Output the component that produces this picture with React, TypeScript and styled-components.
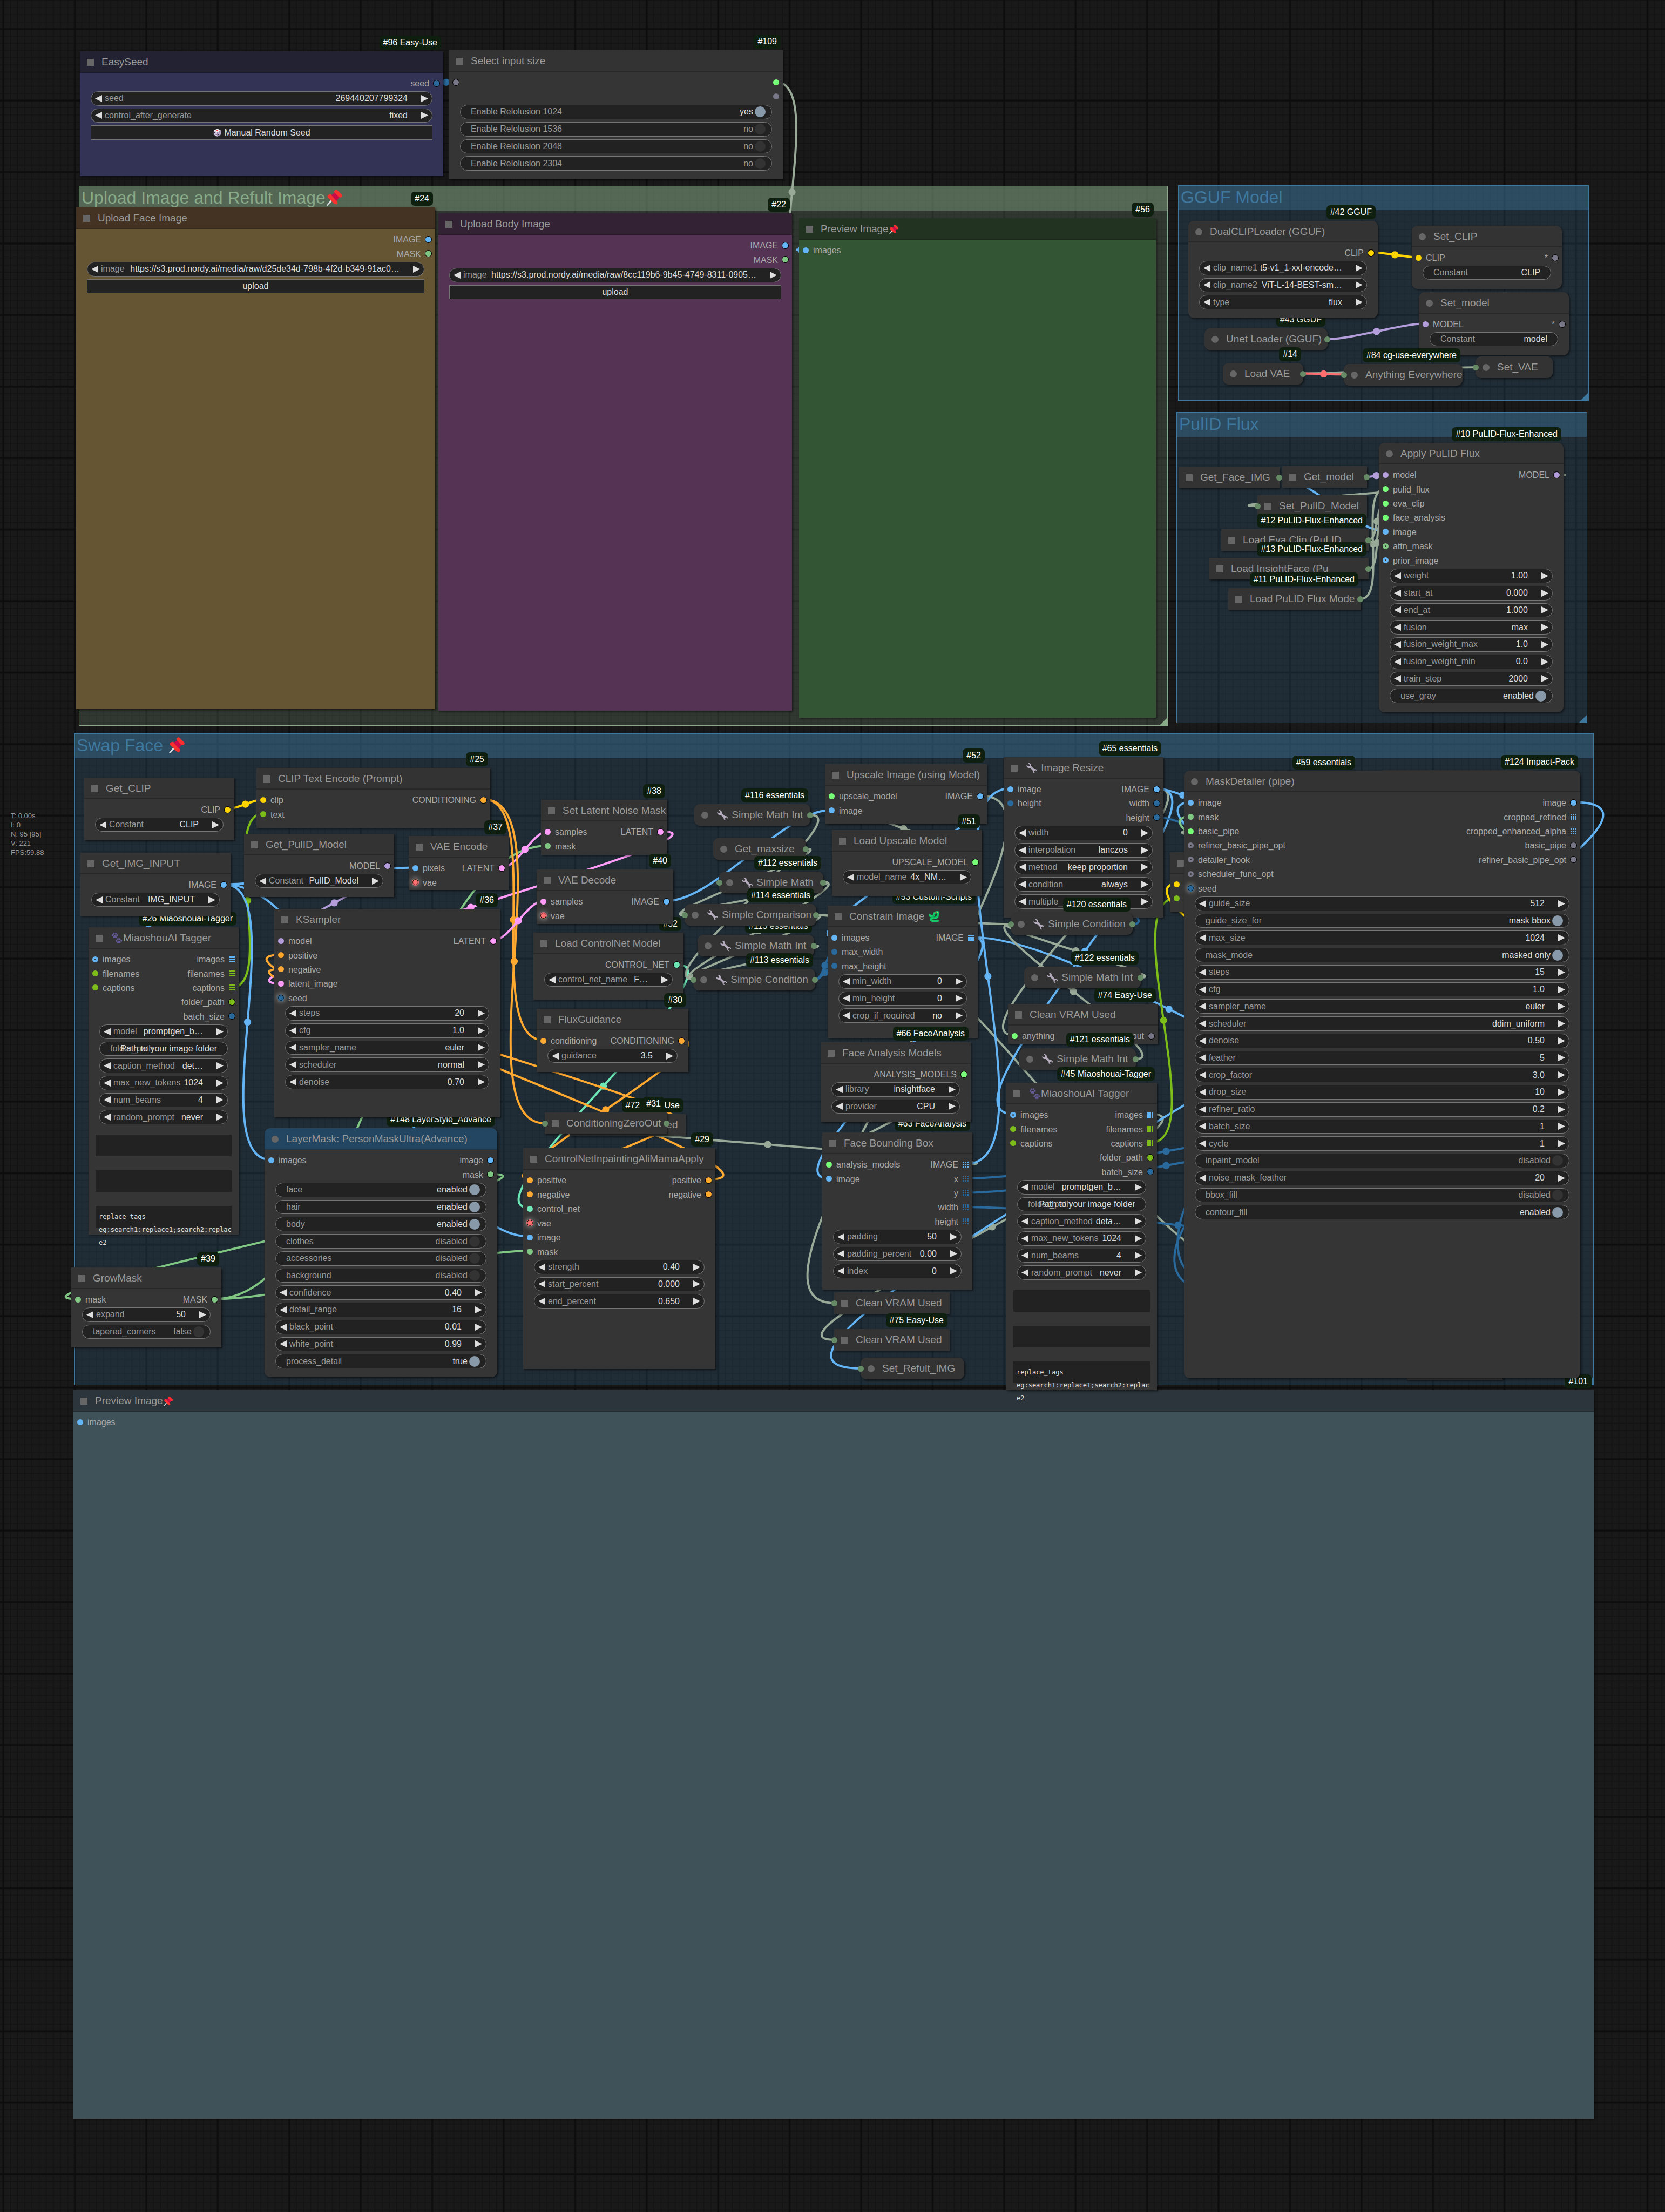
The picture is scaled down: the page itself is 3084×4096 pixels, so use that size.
import React from 'react';
import styled, { createGlobalStyle, css } from 'styled-components';

/* ---------- view ---------- */

const ZOOM = 0.8827;
const px = (v: number) => Math.round(v * ZOOM);

const TITLE = 45;
const SLOT = 30;
const ROW = 36;

const C = {
  image: '#64b5f6',
  mask: '#81c784',
  cond: '#ffa931',
  latent: '#ff9cf9',
  clip: '#ffd500',
  model: '#b39ddb',
  vae: '#ff6e6e',
  net: '#6ee7b7',
  str: '#7dbd1a',
  int: '#29699c',
  live: '#77ff77',
  any: '#777788',
  link: '#9aaa98',
};

/* ---------- types ---------- */

type SlotKind = 'dot' | 'out' | 'ring' | 'grid' | 'glow';
interface Slot { label: string; color: string; kind: SlotKind }
type WidgetKind = 'number' | 'combo' | 'toggle' | 'text' | 'button' | 'dice';
interface Widget { kind: WidgetKind; label: string; value: string; on?: boolean }
type IconName = 'wrench' | 'paw' | 'snake' | 'pin';
interface GraphNode {
  id: string;
  x: number;
  y: number;
  w: number;
  h?: number;
  title: string;
  round?: boolean;
  badge?: string;
  before?: IconName;
  after?: IconName;
  head?: string;
  body?: string;
  ins?: Slot[];
  outs?: Slot[];
  widgets?: Widget[];
  prompts?: boolean;
  left?: boolean;
  right?: boolean;
}
type End = [string, number] | { x: number; y: number };
interface Link { from: End; to: End; color: string }

const i = (label: string, color: string, kind: SlotKind = 'dot'): Slot => ({ label, color, kind });
const o = (label: string, color: string, kind: SlotKind = 'out'): Slot => ({ label, color, kind });
const num = (label: string, value: string): Widget => ({ kind: 'number', label, value });
const combo = (label: string, value: string): Widget => ({ kind: 'combo', label, value });
const text = (label: string, value: string): Widget => ({ kind: 'text', label, value });
const toggle = (label: string, value: string, on: boolean): Widget => ({ kind: 'toggle', label, value, on });
const button = (label: string, kind: WidgetKind = 'button'): Widget => ({ kind, label, value: '' });

/* ---------- graph ---------- */

const groups = [
  { title: 'Upload Image and Refult Image', pin: true, color: '#88aa88', x: 165, y: 390, w: 2285, h: 1133 },
  { title: 'GGUF Model', pin: false, color: '#3f789e', x: 2472, y: 389, w: 862, h: 452 },
  { title: 'PulID Flux', pin: false, color: '#3f789e', x: 2469, y: 864, w: 862, h: 653 },
  { title: 'Swap Face ', pin: true, color: '#3f789e', x: 155, y: 1538, w: 3189, h: 1367 },
];

const taggerIns = [i('images', C.image, 'ring'), i('filenames', C.str), i('captions', C.str)];
const taggerOuts = [
  o('images', C.image, 'grid'), o('filenames', C.str, 'grid'), o('captions', C.str, 'grid'),
  o('folder_path', C.str), o('batch_size', C.int),
];
const taggerWidgets = (method: string) => [
  combo('model', 'promptgen_b…'), text('folder_path', 'Path to your image folder'),
  combo('caption_method', method), num('max_new_tokens', '1024'),
  num('num_beams', '4'), combo('random_prompt', 'never'),
];

const nodes: GraphNode[] = [
  { id: '101', x: 154, y: 2916, w: 3190, h: 1528, title: 'Preview Image', after: 'pin', badge: '#101', head: '#2b353b', body: '#3f5159', ins: [i('images', C.image)] },
  { id: '96', x: 168, y: 108, w: 762, h: 262, title: 'EasySeed', badge: '#96 Easy-Use', head: '#222233', body: '#333355', outs: [o('seed', C.int)], widgets: [num('seed', '269440207799324'), combo('control_after_generate', 'fixed'), button('Manual Random Seed', 'dice')] },
  { id: '109', x: 942, y: 105, w: 700, h: 270, title: 'Select input size', badge: '#109', ins: [i('', C.any, 'out')], outs: [o('', C.live, 'dot'), o('', C.any, 'dot')], widgets: [toggle('Enable Relolusion 1024', 'yes', true), toggle('Enable Relolusion 1536', 'no', false), toggle('Enable Relolusion 2048', 'no', false), toggle('Enable Relolusion 2304', 'no', false)] },
  { id: '24', x: 160, y: 435, w: 753, h: 1052, title: 'Upload Face Image', badge: '#24', head: '#443322', body: '#665533', outs: [o('IMAGE', C.image), o('MASK', C.mask)], widgets: [combo('image', 'https://s3.prod.nordy.ai/media/raw/d25de34d-798b-4f2d-b349-91ac0…'), button('upload')] },
  { id: '22', x: 920, y: 447, w: 742, h: 1043, title: 'Upload Body Image', badge: '#22', head: '#332233', body: '#553355', outs: [o('IMAGE', C.image), o('MASK', C.mask)], widgets: [combo('image', 'https://s3.prod.nordy.ai/media/raw/8cc119b6-9b45-4749-8311-0905…'), button('upload')] },
  { id: '56', x: 1677, y: 458, w: 749, h: 1048, title: 'Preview Image', after: 'pin', badge: '#56', head: '#223322', body: '#335533', ins: [i('images', C.image)] },

  { id: '43', x: 2528, y: 689, w: 258, title: 'Unet Loader (GGUF)', round: true, badge: '#43 GGUF', right: true },
  { id: '42', x: 2493, y: 463, w: 398, h: 204, title: 'DualCLIPLoader (GGUF)', round: true, badge: '#42 GGUF', outs: [o('CLIP', C.clip)], widgets: [combo('clip_name1', 't5-v1_1-xxl-encode…'), combo('clip_name2', 'ViT-L-14-BEST-sm…'), combo('type', 'flux')] },
  { id: 'setclip', x: 2963, y: 474, w: 315, h: 133, title: 'Set_CLIP', round: true, ins: [i('CLIP', C.clip)], outs: [o('*', C.any)], widgets: [text('Constant', 'CLIP')] },
  { id: 'setmodel', x: 2977, y: 613, w: 315, h: 132, title: 'Set_model', round: true, ins: [i('MODEL', C.model)], outs: [o('*', C.any)], widgets: [text('Constant', 'model')] },
  { id: '14', x: 2566, y: 761, w: 169, title: 'Load VAE', round: true, badge: '#14', right: true },
  { id: '84', x: 2820, y: 763, w: 249, title: 'Anything Everywhere', round: true, badge: '#84 cg-use-everywhere', left: true },
  { id: 'setvae', x: 3096, y: 748, w: 162, title: 'Set_VAE', round: true, left: true },

  { id: 'getface', x: 2473, y: 979, w: 212, title: 'Get_Face_IMG', right: true },
  { id: 'getmodel', x: 2691, y: 978, w: 178, title: 'Get_model', right: true },
  { id: 'setpulid', x: 2638, y: 1039, w: 230, title: 'Set_PulID_Model', left: true },
  { id: '12', x: 2563, y: 1110, w: 309, title: 'Load Eva Clip (PuLID', badge: '#12 PuLID-Flux-Enhanced', right: true },
  { id: '13', x: 2538, y: 1170, w: 334, title: 'Load InsightFace (Pu', badge: '#13 PuLID-Flux-Enhanced', right: true },
  { id: '11', x: 2577, y: 1234, w: 278, title: 'Load PuLID Flux Mode', badge: '#11 PuLID-Flux-Enhanced', right: true },
  { id: '10', x: 2893, y: 929, w: 387, h: 565, title: 'Apply PuLID Flux', round: true, badge: '#10 PuLID-Flux-Enhanced', ins: [i('model', C.model), i('pulid_flux', C.live), i('eva_clip', C.live), i('face_analysis', C.live), i('image', C.image), i('attn_mask', C.mask, 'ring'), i('prior_image', C.image, 'ring')], outs: [o('MODEL', C.model)], widgets: [num('weight', '1.00'), num('start_at', '0.000'), num('end_at', '1.000'), combo('fusion', 'max'), num('fusion_weight_max', '1.0'), num('fusion_weight_min', '0.0'), num('train_step', '2000'), toggle('use_gray', 'enabled', true)] },

  { id: 'getclip', x: 177, y: 1631, w: 315, h: 131, title: 'Get_CLIP', outs: [o('CLIP', C.clip)], widgets: [combo('Constant', 'CLIP')] },
  { id: '25', x: 538, y: 1611, w: 491, h: 126, title: 'CLIP Text Encode (Prompt)', badge: '#25', ins: [i('clip', C.clip), i('text', C.str)], outs: [o('CONDITIONING', C.cond)] },
  { id: 'getpulid', x: 512, y: 1749, w: 315, h: 132, title: 'Get_PulID_Model', outs: [o('MODEL', C.model)], widgets: [combo('Constant', 'PulID_Model')] },
  { id: '37', x: 858, y: 1754, w: 210, h: 113, title: 'VAE Encode', badge: '#37', ins: [i('pixels', C.image), i('vae', C.vae, 'glow')], outs: [o('LATENT', C.latent)] },
  { id: '26', x: 186, y: 1945, w: 315, h: 645, title: 'MiaoshouAI Tagger', before: 'paw', badge: '#26 Miaoshouai-Tagger', ins: taggerIns, outs: taggerOuts, widgets: taggerWidgets('det…'), prompts: true },
  { id: 'getimg', x: 169, y: 1789, w: 315, h: 132, title: 'Get_IMG_INPUT', outs: [o('IMAGE', C.image)], widgets: [combo('Constant', 'IMG_INPUT')] },
  { id: '148', x: 555, y: 2367, w: 488, h: 522, title: 'LayerMask: PersonMaskUltra(Advance)', round: true, badge: '#148 LayerStyle_Advance', head: '#234762', ins: [i('images', C.image)], outs: [o('image', C.image), o('mask', C.mask)], widgets: [toggle('face', 'enabled', true), toggle('hair', 'enabled', true), toggle('body', 'enabled', true), toggle('clothes', 'disabled', false), toggle('accessories', 'disabled', false), toggle('background', 'disabled', false), num('confidence', '0.40'), num('detail_range', '16'), num('black_point', '0.01'), num('white_point', '0.99'), toggle('process_detail', 'true', true)] },
  { id: '36', x: 576, y: 1907, w: 473, h: 437, title: 'KSampler', badge: '#36', ins: [i('model', C.model), i('positive', C.cond), i('negative', C.cond), i('latent_image', C.latent), i('seed', C.int, 'glow')], outs: [o('LATENT', C.latent)], widgets: [num('steps', '20'), num('cfg', '1.0'), combo('sampler_name', 'euler'), combo('scheduler', 'normal'), num('denoise', '0.70')] },
  { id: '39', x: 150, y: 2659, w: 315, h: 168, title: 'GrowMask', badge: '#39', ins: [i('mask', C.mask)], outs: [o('MASK', C.mask)], widgets: [num('expand', '50'), toggle('tapered_corners', 'false', false)] },

  { id: '38', x: 1135, y: 1678, w: 265, h: 115, title: 'Set Latent Noise Mask', badge: '#38', ins: [i('samples', C.latent), i('mask', C.mask)], outs: [o('LATENT', C.latent)] },
  { id: '32', x: 1119, y: 1957, w: 315, h: 141, title: 'Load ControlNet Model', badge: '#32', outs: [o('CONTROL_NET', C.net)], widgets: [combo('control_net_name', 'F…')] },
  { id: '40', x: 1126, y: 1824, w: 287, h: 114, title: 'VAE Decode', badge: '#40', ins: [i('samples', C.latent), i('vae', C.vae, 'glow')], outs: [o('IMAGE', C.image)] },
  { id: '30', x: 1126, y: 2116, w: 318, h: 133, title: 'FluxGuidance', badge: '#30', ins: [i('conditioning', C.cond)], outs: [o('CONDITIONING', C.cond)], widgets: [num('guidance', '3.5')] },
  { id: '72', x: 1196, y: 2337, w: 242, title: 'Clean VRAM Used', badge: '#72 Easy-Use', left: true },
  { id: '31', x: 1143, y: 2334, w: 256, title: 'ConditioningZeroOut', badge: '#31', left: true, right: true },
  { id: '29', x: 1098, y: 2408, w: 403, h: 463, title: 'ControlNetInpaintingAliMamaApply', badge: '#29', ins: [i('positive', C.cond), i('negative', C.cond), i('control_net', C.net), i('vae', C.vae, 'glow'), i('image', C.image), i('mask', C.mask)], outs: [o('positive', C.cond), o('negative', C.cond)], widgets: [num('strength', '0.40'), num('start_percent', '0.000'), num('end_percent', '0.650')] },

  { id: '116', x: 1457, y: 1687, w: 244, title: 'Simple Math Int', before: 'wrench', round: true, badge: '#116 essentials', right: true },
  { id: 'getmax', x: 1497, y: 1758, w: 195, title: 'Get_maxsize', round: true, right: true },
  { id: '112', x: 1509, y: 1828, w: 219, title: 'Simple Math', before: 'wrench', round: true, badge: '#112 essentials', left: true, right: true },
  { id: '115', x: 1464, y: 1961, w: 245, title: 'Simple Math Int', before: 'wrench', round: true, badge: '#115 essentials', right: true },
  { id: '114', x: 1436, y: 1897, w: 276, title: 'Simple Comparison', before: 'wrench', round: true, badge: '#114 essentials', left: true, right: true },
  { id: '113', x: 1455, y: 2032, w: 256, title: 'Simple Condition', before: 'wrench', round: true, badge: '#113 essentials', left: true, right: true },

  { id: '52', x: 1731, y: 1603, w: 340, h: 126, title: 'Upscale Image (using Model)', badge: '#52', ins: [i('upscale_model', C.live), i('image', C.image)], outs: [o('IMAGE', C.image)] },
  { id: '53', x: 1737, y: 1900, w: 315, h: 277, title: 'Constrain Image', after: 'snake', badge: '#53 Custom-Scripts', ins: [i('images', C.image), i('max_width', C.int), i('max_height', C.int)], outs: [o('IMAGE', C.image, 'grid')], widgets: [num('min_width', '0'), num('min_height', '0'), combo('crop_if_required', 'no')] },
  { id: '51', x: 1746, y: 1741, w: 315, h: 138, title: 'Load Upscale Model', badge: '#51', outs: [o('UPSCALE_MODEL', C.live)], widgets: [combo('model_name', '4x_NM…')] },
  { id: '63', x: 1725, y: 2376, w: 315, h: 330, title: 'Face Bounding Box', badge: '#63 FaceAnalysis', ins: [i('analysis_models', C.live), i('image', C.image)], outs: [o('IMAGE', C.image, 'grid'), o('x', C.int, 'grid'), o('y', C.int, 'grid'), o('width', C.int, 'grid'), o('height', C.int, 'grid')], widgets: [num('padding', '50'), num('padding_percent', '0.00'), num('index', '0')] },
  { id: '66', x: 1722, y: 2187, w: 315, h: 168, title: 'Face Analysis Models', badge: '#66 FaceAnalysis', outs: [o('ANALYSIS_MODELS', C.live)], widgets: [combo('library', 'insightface'), combo('provider', 'CPU')] },
  { id: '73', x: 1750, y: 2711, w: 242, title: 'Clean VRAM Used', left: true },
  { id: '75', x: 1750, y: 2788, w: 242, title: 'Clean VRAM Used', badge: '#75 Easy-Use', left: true },
  { id: 'setres', x: 1806, y: 2848, w: 218, title: 'Set_Refult_IMG', round: true, left: true },

  { id: '65', x: 2106, y: 1588, w: 335, h: 336, title: 'Image Resize', before: 'wrench', badge: '#65 essentials', ins: [i('image', C.image), i('height', C.int)], outs: [o('IMAGE', C.image), o('width', C.int), o('height', C.int)], widgets: [num('width', '0'), combo('interpolation', 'lanczos'), combo('method', 'keep proportion'), combo('condition', 'always'), num('multiple_of', '0')] },
  { id: '120', x: 2121, y: 1916, w: 256, title: 'Simple Condition', before: 'wrench', round: true, badge: '#120 essentials', left: true, right: true },
  { id: '122', x: 2149, y: 2028, w: 245, title: 'Simple Math Int', before: 'wrench', round: true, badge: '#122 essentials', right: true },
  { id: '74', x: 2115, y: 2106, w: 315, h: 84, title: 'Clean VRAM Used', badge: '#74 Easy-Use', ins: [i('anything', C.live)], outs: [o('output', C.any)] },
  { id: '121', x: 2139, y: 2199, w: 245, title: 'Simple Math Int', before: 'wrench', round: true, badge: '#121 essentials', right: true },
  { id: '45', x: 2112, y: 2271, w: 316, h: 645, title: 'MiaoshouAI Tagger', before: 'paw', badge: '#45 Miaoshouai-Tagger', ins: taggerIns, outs: taggerOuts, widgets: taggerWidgets('deta…'), prompts: true },

  { id: 'encode2', x: 2455, y: 1788, w: 400, h: 126, title: '', ins: [i('', C.clip), i('', C.str)] },
  { id: '59', x: 2600, y: 1618, w: 248, title: '', badge: '#59 essentials' },
  { id: 'back1', x: 2901, y: 1615, w: 317, title: '' },
  { id: 'back2', x: 2952, y: 2849, w: 200, title: '' },
  { id: '124', x: 2484, y: 1617, w: 832, h: 1274, title: 'MaskDetailer (pipe)', round: true, badge: '#124 Impact-Pack', ins: [i('image', C.image), i('mask', C.mask), i('basic_pipe', C.live), i('refiner_basic_pipe_opt', C.any, 'ring'), i('detailer_hook', C.any, 'ring'), i('scheduler_func_opt', C.any, 'ring'), i('seed', C.int, 'glow')], outs: [o('image', C.image), o('cropped_refined', C.image, 'grid'), o('cropped_enhanced_alpha', C.image, 'grid'), o('basic_pipe', C.any), o('refiner_basic_pipe_opt', C.any)], widgets: [num('guide_size', '512'), toggle('guide_size_for', 'mask bbox', true), num('max_size', '1024'), toggle('mask_mode', 'masked only', true), num('steps', '15'), num('cfg', '1.0'), combo('sampler_name', 'euler'), combo('scheduler', 'ddim_uniform'), num('denoise', '0.50'), num('feather', '5'), num('crop_factor', '3.0'), num('drop_size', '10'), num('refiner_ratio', '0.2'), num('batch_size', '1'), num('cycle', '1'), toggle('inpaint_model', 'disabled', false), num('noise_mask_feather', '20'), toggle('bbox_fill', 'disabled', false), toggle('contour_fill', 'enabled', true)] },
];

const at = (x: number, y: number) => ({ x, y });

const links: Link[] = [
  { from: ['96', 0], to: ['109', 0], color: C.int },
  { from: at(1671, 524), to: ['56', 0], color: C.image },
  { from: ['42', 0], to: ['setclip', 0], color: C.clip },
  { from: ['43', 0], to: ['setmodel', 0], color: C.model },
  { from: ['14', 0], to: ['setvae', 0], color: C.link },
  { from: ['14', 0], to: ['84', 0], color: C.vae },
  { from: ['getmodel', 0], to: ['10', 0], color: C.model },
  { from: ['getface', 0], to: ['10', 4], color: C.image },
  { from: ['11', 0], to: ['10', 1], color: C.link },
  { from: ['12', 0], to: ['10', 2], color: C.link },
  { from: ['13', 0], to: ['10', 3], color: C.link },
  { from: ['10', 0], to: ['setpulid', 0], color: C.link },
  { from: ['getclip', 0], to: ['25', 0], color: C.clip },
  { from: ['26', 2], to: ['25', 1], color: C.str },
  { from: ['getimg', 0], to: ['37', 0], color: C.image },
  { from: ['getimg', 0], to: ['26', 0], color: C.image },
  { from: ['getimg', 0], to: ['148', 0], color: C.image },
  { from: ['getimg', 0], to: ['29', 4], color: C.image },
  { from: ['getpulid', 0], to: ['36', 0], color: C.model },
  { from: ['39', 0], to: ['38', 1], color: C.mask },
  { from: ['39', 0], to: ['29', 5], color: C.mask },
  { from: ['148', 1], to: ['39', 0], color: C.mask },
  { from: ['37', 0], to: ['38', 0], color: C.latent },
  { from: ['38', 0], to: ['36', 3], color: C.latent },
  { from: ['25', 0], to: ['30', 0], color: C.cond },
  { from: ['25', 0], to: ['31', 0], color: C.cond },
  { from: ['36', 0], to: ['40', 0], color: C.latent },
  { from: ['40', 0], to: ['52', 1], color: C.image },
  { from: ['32', 0], to: ['29', 2], color: C.net },
  { from: ['30', 0], to: ['29', 0], color: C.cond },
  { from: ['31', 0], to: ['29', 1], color: C.cond },
  { from: ['29', 0], to: ['36', 1], color: C.cond },
  { from: ['31', 0], to: ['36', 2], color: C.cond },
  { from: ['63', 0], to: ['72', 0], color: C.link },
  { from: ['116', 0], to: ['113', 0], color: C.link },
  { from: ['getmax', 0], to: ['114', 0], color: C.link },
  { from: ['112', 0], to: ['113', 0], color: C.link },
  { from: ['112', 0], to: ['114', 0], color: C.link },
  { from: ['115', 0], to: ['113', 0], color: C.link },
  { from: ['114', 0], to: ['113', 0], color: C.link },
  { from: ['114', 0], to: ['120', 0], color: C.link },
  { from: ['114', 0], to: at(2700, 2700), color: C.link },
  { from: ['113', 0], to: ['53', 1], color: C.int },
  { from: ['113', 0], to: ['53', 2], color: C.int },
  { from: ['51', 0], to: ['52', 0], color: C.link },
  { from: ['52', 0], to: ['53', 0], color: C.image },
  { from: ['52', 0], to: ['73', 0], color: C.link },
  { from: ['53', 0], to: ['63', 1], color: C.image },
  { from: ['53', 0], to: at(2868, 2268), color: C.image },
  { from: ['66', 0], to: ['63', 0], color: C.link },
  { from: ['63', 0], to: ['65', 0], color: C.image },
  { from: ['63', 1], to: at(2868, 2358), color: C.int },
  { from: ['63', 2], to: at(2868, 2388), color: C.int },
  { from: ['63', 3], to: at(2918, 2608), color: C.int },
  { from: ['45', 0], to: ['75', 0], color: C.link },
  { from: ['124', 0], to: ['setres', 0], color: C.image },
  { from: ['65', 0], to: at(2537, 1682), color: C.image },
  { from: ['65', 0], to: ['74', 0], color: C.link },
  { from: ['65', 0], to: ['45', 0], color: C.image },
  { from: ['65', 2], to: at(2650, 1790), color: C.int },
  { from: ['120', 0], to: ['65', 1], color: C.int },
  { from: ['122', 0], to: ['120', 0], color: C.link },
  { from: ['121', 0], to: ['120', 0], color: C.link },
  { from: ['45', 2], to: ['encode2', 1], color: C.str },
];

const looseWires = [
  { d: 'M1626 171 C1698 171 1664 349 1655 485', color: C.link },
  { d: 'M2498 1683 C2462 1683 2462 1712 2500 1740', color: C.image },
  { d: 'M2498 1713 C2468 1713 2468 1730 2500 1752', color: C.mask },
  { d: 'M2498 1745 C2474 1742 2474 1750 2500 1750', color: C.link },
  { d: 'M2469 1854 C2440 1854 2440 1880 2478 1914 L2500 1935', color: C.clip },
  { d: 'M2490 2525 C2465 2580 2465 2640 2490 2664', color: C.int },
  { d: 'M2490 2565 C2450 2630 2462 2675 2490 2692', color: C.int },
];

/* ---------- drawings ---------- */

const Svg = styled.svg<{ $size: number }>`
  flex: none;
  width: ${(p) => p.$size}px;
  height: ${(p) => p.$size}px;
`;

const Pin = ({ size }: { size: number }) => (
  <Svg $size={size} viewBox="0 0 36 36" aria-hidden="true">
    <path d="M2 34 L14 19 L17 22 L4 35 Z" fill="#dfe3e6" />
    <path d="M5 13 Q9 9 14 13 L24 25 Q27 30 23 32 L18 31 L5 18 Q3 15 5 13 Z" fill="#f8312f" />
    <path d="M12 13 L20 7 L29 16 L23 25 Z" fill="#ca0b4a" />
    <path d="M19 3 Q22 0 25 3 L34 12 Q36 15 33 17 Q30 19 27 16 L19 8 Q17 5 19 3 Z" fill="#f8312f" />
  </Svg>
);

const Wrench = () => (
  <Svg $size={24} viewBox="0 0 24 24" aria-hidden="true">
    <path
      d="M5 3 L8 6 L8 8.500 L5.500 9 L2.500 6.500 C2 9.500 4 12 7 12 L9 12 L14.500 17.500 C14 20 15.500 22 18.500 22 L16.500 19.500 L17.500 17 L20 16.500 L22 19 C22.500 16 20.500 14 17.500 14 L16.500 14 L11 8.500 C11.500 5 9 2.500 5 3 Z"
      fill="#b4acbc"
    />
  </Svg>
);

const Paw = () => (
  <Svg $size={24} viewBox="0 0 24 24" aria-hidden="true" fill="#635994">
    <ellipse cx="4.500" cy="7" rx="1.600" ry="2" />
    <ellipse cx="7" cy="4" rx="1.600" ry="2" />
    <ellipse cx="10.500" cy="4" rx="1.600" ry="2" />
    <ellipse cx="13" cy="7" rx="1.600" ry="2" />
    <path d="M8.700 7 C11 7 12.500 9.500 12 11 C11.500 12.500 10 11.800 8.700 11.800 C7.500 11.800 6 12.500 5.500 11 C5 9.500 6.500 7 8.700 7 Z" />
    <ellipse cx="12" cy="17" rx="1.600" ry="2" />
    <ellipse cx="14.500" cy="14" rx="1.600" ry="2" />
    <ellipse cx="18" cy="14" rx="1.600" ry="2" />
    <ellipse cx="20.700" cy="17" rx="1.600" ry="2" />
    <path d="M16.300 17 C18.500 17 20 19.500 19.500 21 C19 22.500 17.500 21.800 16.300 21.800 C15 21.800 13.500 22.500 13 21 C12.500 19.500 14 17 16.300 17 Z" />
  </Svg>
);

const Snake = () => (
  <Svg $size={24} viewBox="0 0 24 24" aria-hidden="true" fill="none" strokeLinecap="round" strokeLinejoin="round">
    <path d="M4 9 C4 13 11 13 12 9 C12 5 14 4 19 4 L19 9 C19 13 17 15 12 15 C5 15 4 20 10 20 L19 20" stroke="#14c765" strokeWidth="4" />
    <path d="M13 8 C15 7 16 8 16 10 C16 12 13 13 10 13" stroke="#008f4c" strokeWidth="1" />
    <circle cx="15" cy="4" r="1" fill="#f8312f" />
    <circle cx="19" cy="4" r="1" fill="#fcd53f" />
  </Svg>
);

const Dice = () => (
  <Svg $size={17} viewBox="0 0 18 18" aria-hidden="true">
    <path d="M2 5 L9 1 L16 5 L9 9 Z" fill="#f4f4f4" />
    <path d="M2 5 L9 9 L9 17 L2 13 Z" fill="#d3c8e4" />
    <path d="M16 5 L9 9 L9 17 L16 13 Z" fill="#b8a8d0" />
    <circle cx="9" cy="5" r="1.500" fill="#f8312f" />
    <circle cx="4" cy="9" r="1" fill="#402a32" />
    <circle cx="7" cy="13" r="1" fill="#402a32" />
    <circle cx="11" cy="13" r="1" fill="#402a32" />
    <circle cx="14" cy="8" r="1" fill="#402a32" />
  </Svg>
);

const Icon = ({ name }: { name: IconName }) => {
  if (name === 'wrench') return <Wrench />;
  if (name === 'paw') return <Paw />;
  if (name === 'snake') return <Snake />;
  return <Pin size={19} />;
};

const GridMark = ({ color }: { color: string }) => (
  <Svg $size={11} viewBox="0 0 11 11" aria-hidden="true" fill={color}>
    {[0, 4, 8].map((y) => [0, 4, 8].map((x) => <rect key={`${x}-${y}`} x={x} y={y} width="3" height="3" />))}
  </Svg>
);

const Arrow = ({ flip }: { flip?: boolean }) => (
  <Svg $size={13} viewBox="0 0 13 13" aria-hidden="true">
    <path d={flip ? 'M0 0 L13 6.500 L0 13 Z' : 'M13 0 L0 6.500 L13 13 Z'} fill="#dddddd" />
  </Svg>
);

/* ---------- styled parts ---------- */

const Global = createGlobalStyle`
  body { margin: 0; background: #191919; }
  *, *::before, *::after { box-sizing: border-box; }
  button, input, select, textarea {
    margin: 0; padding: 0; border: 0; background: none; color: inherit; font: inherit; outline: 0;
  }
`;

const Canvas = styled.main`
  position: relative;
  width: 100%;
  min-height: 100vh;
  overflow: hidden;
  background: #191919;
  color: #aaa;
  font: 16px/20px "Liberation Sans", Arial, sans-serif;
`;

const Layer = styled.svg`
  position: absolute;
  inset: 0;
  width: 100%;
  height: 100%;
  pointer-events: none;
`;

const Stats = styled.aside`
  position: absolute;
  left: 20px;
  top: 1502px;
  display: flex;
  flex-direction: column;
  color: #969696;
  font-size: 13px;
  line-height: 17px;
`;

interface Box { $x: number; $y: number; $w: number; $h: number }

const GroupBox = styled.section.attrs<Box & { $color: string }>((p) => ({
  style: { left: p.$x, top: p.$y, width: p.$w, height: p.$h },
}))<Box & { $color: string }>`
  position: absolute;
  border: 1px solid ${(p) => p.$color};
  background: ${(p) => p.$color}38;
  color: ${(p) => p.$color};

  &::after {
    content: '';
    position: absolute;
    right: 0;
    bottom: 0;
    width: 14px;
    height: 14px;
    background: ${(p) => p.$color};
    clip-path: polygon(100% 0, 100% 100%, 0 100%);
  }
`;

const GroupTitle = styled.h2<{ $color: string }>`
  display: flex;
  align-items: center;
  height: 45px;
  margin: 0;
  padding: 0 4px 4px;
  background: ${(p) => p.$color}6b;
  font-size: 32px;
  font-weight: 400;
  line-height: 40px;
  white-space: pre;
`;

const NodeBox = styled.article.attrs<Box>((p) => ({
  style: { left: p.$x, top: p.$y, width: p.$w, height: p.$h },
}))<Box & { $round?: boolean; $body: string }>`
  position: absolute;
  border-radius: ${(p) => (p.$round ? 11 : 0)}px;
  background: ${(p) => p.$body};
  box-shadow: 2px 2px 4px rgba(0, 0, 0, 0.55);
`;

const Header = styled.header<{ $head: string; $round?: boolean; $closed?: boolean }>`
  display: flex;
  align-items: center;
  gap: 14px;
  height: 40px;
  padding-left: 13px;
  background: ${(p) => p.$head};
  border-radius: ${(p) => (p.$round ? (p.$closed ? '11px' : '11px 11px 0 0') : '0')};
  box-shadow: ${(p) => (p.$closed ? 'none' : 'inset 0 -2px 0 rgba(0, 0, 0, 0.2)')};
`;

const Fold = styled.span<{ $round?: boolean }>`
  flex: none;
  width: 13px;
  height: 13px;
  border-radius: ${(p) => (p.$round ? 7 : 0)}px;
  background: #666;
`;

const Title = styled.h3`
  display: flex;
  align-items: center;
  margin: 0;
  color: #999;
  font-size: 19px;
  font-weight: 400;
  line-height: 24px;
  white-space: pre;
`;

const Badge = styled.span`
  position: absolute;
  right: 4px;
  bottom: calc(100% + 3px);
  height: 26px;
  padding: 0 7px;
  border-radius: 7px;
  background: #0f1f0f;
  color: #fff;
  line-height: 26px;
  white-space: nowrap;
`;

const Port = styled.span<{ $side: 'left' | 'right' }>`
  position: absolute;
  ${(p) => p.$side}: -5px;
  top: 15px;
  width: 11px;
  height: 11px;
  border-radius: 6px;
  background: #668a66;
`;

const Slots = styled.div.attrs<{ $rows: number }>((p) => ({
  style: { height: px(p.$rows * SLOT) + 8 },
}))<{ $rows: number }>`
  display: flex;
  justify-content: space-between;
  padding: 6px 7px 2px;
`;

const SlotList = styled.ul<{ $rows: number }>`
  display: grid;
  grid-template-rows: repeat(${(p) => p.$rows}, 1fr);
  height: 100%;
  margin: 0;
  padding: 0;
  list-style: none;
`;

const SlotRow = styled.li<{ $out?: boolean }>`
  display: flex;
  flex-direction: ${(p) => (p.$out ? 'row-reverse' : 'row')};
  align-items: center;
  gap: 8px;
  white-space: nowrap;
`;

const SlotText = styled.span`
  padding-top: 2px;
`;

const Dot = styled.span<{ $color: string; $kind: SlotKind }>`
  flex: none;
  width: 11px;
  height: 11px;
  border-radius: 6px;
  background: ${(p) => p.$color};
  ${(p) => p.$kind === 'out' && css`box-shadow: 0 0 0 1px #000;`}
  ${(p) => p.$kind === 'ring' && css`background: #333; border: 4px solid ${p.$color};`}
  ${(p) => p.$kind === 'glow' && css`
    border: 1px solid #111;
    outline: 1px solid ${p.$color};
    box-shadow: 0 0 8px 3px rgba(255, 255, 255, 0.35);
  `}
`;

const WidgetList = styled.div.attrs<{ $rows: number }>((p) => ({
  style: { height: px(p.$rows * ROW - 6) },
}))<{ $rows: number }>`
  display: grid;
  grid-template-rows: repeat(${(p) => p.$rows}, 1fr);
  row-gap: 5px;
  padding: 0 20px;
`;

const shell = css`
  min-height: 0;
  border: 1px solid #757575;
  background: #222;
  color: #ddd;
`;

const Stepper = styled.div`
  ${shell}
  display: flex;
  align-items: center;
  padding: 0 7px;
  border-radius: 14px;
`;

const StepButton = styled.button`
  display: flex;
  flex: none;
`;

const Name = styled.label`
  flex: none;
  color: #999;
  white-space: nowrap;
`;

const StepName = styled(Name)`
  margin-left: 5px;
`;

const stepValue = css`
  flex: 1 1 0;
  width: 0;
  min-width: 0;
  height: 20px;
  margin-right: 25px;
  text-align: right;
`;

const StepInput = styled.input`
  ${stepValue}
`;

const StepSelect = styled.select`
  ${stepValue}
  appearance: none;
  text-align-last: right;
`;

const TextRow = styled.div`
  ${shell}
  display: grid;
  align-items: center;
  padding: 0 19px;
  border-radius: 14px;

  > * {
    grid-area: 1 / 1;
  }
`;

const TextInput = styled.input`
  width: 100%;
  height: 20px;
  text-align: right;
`;

const ToggleRow = styled.div<{ $on?: boolean }>`
  ${shell}
  display: flex;
  align-items: center;
  gap: 3px;
  padding: 0 11px 0 19px;
  border-radius: 14px;
  color: ${(p) => (p.$on ? '#ddd' : '#999')};
`;

const ToggleState = styled.span`
  margin-left: auto;
`;

const Knob = styled.input`
  flex: none;
  width: 20px;
  height: 20px;
  border-radius: 10px;
  appearance: none;
  background: #333;

  &:checked {
    background: #8899aa;
  }
`;

const PushButton = styled.button`
  ${shell}
  display: flex;
  align-items: center;
  justify-content: center;
  gap: 4px;
`;

const Prompts = styled.div`
  display: grid;
  gap: 26px;
  padding: 19px 13px 0;
`;

const Prompt = styled.textarea<{ $long?: boolean }>`
  display: block;
  width: 100%;
  height: ${(p) => (p.$long ? 84 : 40)}px;
  padding: 8px 0 0 6px;
  overflow: hidden;
  resize: none;
  background: linear-gradient(#222, #222) no-repeat 0 0 / 100% 40px;
  color: #ddd;
  font: 12px/24px "DejaVu Sans Mono", "Liberation Mono", monospace;
  word-break: break-all;
`;

/* ---------- components ---------- */

const SlotMark = ({ slot }: { slot: Slot }) =>
  slot.kind === 'grid' ? <GridMark color={slot.color} /> : <Dot $color={slot.color} $kind={slot.kind} />;

const WidgetView = ({ widget, id }: { widget: Widget; id: string }) => {
  const { kind, label, value, on } = widget;
  if (kind === 'button' || kind === 'dice') {
    return (
      <PushButton type="button">
        {kind === 'dice' && <Dice />}
        {label}
      </PushButton>
    );
  }
  if (kind === 'toggle') {
    return (
      <ToggleRow $on={on}>
        <Name htmlFor={id}>{label}</Name>
        <ToggleState>{value}</ToggleState>
        <Knob id={id} type="checkbox" defaultChecked={on} />
      </ToggleRow>
    );
  }
  if (kind === 'text') {
    return (
      <TextRow>
        <Name htmlFor={id}>{label}</Name>
        <TextInput id={id} type="text" defaultValue={value} />
      </TextRow>
    );
  }
  return (
    <Stepper>
      <StepButton type="button" aria-label={`Previous ${label}`}><Arrow /></StepButton>
      <StepName htmlFor={id}>{label}</StepName>
      {kind === 'combo' ? (
        <StepSelect id={id} defaultValue={value}>
          <option value={value}>{value}</option>
        </StepSelect>
      ) : (
        <StepInput id={id} type="text" inputMode="decimal" defaultValue={value} />
      )}
      <StepButton type="button" aria-label={`Next ${label}`}><Arrow flip /></StepButton>
    </Stepper>
  );
};

const NodeView = ({ node }: { node: GraphNode }) => {
  const { ins = [], outs = [], widgets = [] } = node;
  const closed = node.h === undefined;
  const rows = Math.max(ins.length, outs.length);
  return (
    <NodeBox
      $x={px(node.x)}
      $y={px(node.y)}
      $w={px(node.w)}
      $h={closed ? 40 : px(node.h as number)}
      $round={node.round}
      $body={node.body ?? '#353535'}
    >
      <Header $head={node.head ?? '#333333'} $round={node.round} $closed={closed}>
        <Fold $round={node.round} />
        <Title>
          {node.before && <Icon name={node.before} />}
          {node.before === 'wrench' ? ` ${node.title}` : node.title}
          {node.after === 'snake' ? ' ' : ''}
          {node.after && <Icon name={node.after} />}
        </Title>
      </Header>
      {rows > 0 && (
        <Slots $rows={rows}>
          <SlotList $rows={rows}>
            {ins.map((slot, n) => (
              <SlotRow key={n}><SlotMark slot={slot} /><SlotText>{slot.label}</SlotText></SlotRow>
            ))}
          </SlotList>
          <SlotList $rows={rows}>
            {outs.map((slot, n) => (
              <SlotRow key={n} $out><SlotMark slot={slot} /><SlotText>{slot.label}</SlotText></SlotRow>
            ))}
          </SlotList>
        </Slots>
      )}
      {widgets.length > 0 && (
        <WidgetList $rows={widgets.length}>
          {widgets.map((widget) => (
            <WidgetView key={widget.label} widget={widget} id={`n${node.id}-${widget.label.replace(/ /g, '-')}`} />
          ))}
        </WidgetList>
      )}
      {node.prompts && (
        <Prompts>
          <Prompt aria-label="Prefix" />
          <Prompt aria-label="Suffix" />
          <Prompt aria-label="Replace tags" $long defaultValue={'replace_tags\neg:search1:replace1;search2:replace2'} />
        </Prompts>
      )}
      {node.left && <Port $side="left" />}
      {node.right && <Port $side="right" />}
      {node.badge && <Badge>{node.badge}</Badge>}
    </NodeBox>
  );
};

const byId = new Map(nodes.map((node) => [node.id, node]));

const endPoint = (end: End, out: boolean) => {
  if (!Array.isArray(end)) return end;
  const node = byId.get(end[0]) as GraphNode;
  if (node.h === undefined) return at(out ? node.x + node.w : node.x, node.y + TITLE / 2);
  return at(out ? node.x + node.w - 14 : node.x + 14, node.y + TITLE + 21 + SLOT * end[1]);
};

const Wire = ({ link }: { link: Link }) => {
  const a = endPoint(link.from, true);
  const b = endPoint(link.to, false);
  const pull = Math.hypot(b.x - a.x, b.y - a.y) / 4;
  return (
    <g>
      <path
        d={`M${a.x} ${a.y} C${a.x + pull} ${a.y} ${b.x - pull} ${b.y} ${b.x} ${b.y}`}
        fill="none"
        stroke={link.color}
        strokeWidth="4.5"
      />
      <circle cx={(a.x + b.x) / 2} cy={(a.y + b.y) / 2} r="7.5" fill={link.color} />
    </g>
  );
};

const fine = [15, 30, 45, 60, 75, 90, 105, 120, 135];

const Backdrop = () => (
  <Layer aria-hidden="true">
    <defs>
      <pattern id="grid" width="150" height="150" patternUnits="userSpaceOnUse" patternTransform={`scale(${ZOOM}) translate(7 61)`}>
        <path d={fine.map((v) => `M${v} 0V150M0 ${v}H150`).join('')} stroke="#121212" strokeWidth="1.6" />
        <path d="M0 0V150M150 0V150M0 0H150M0 150H150" stroke="#0d0d0d" strokeWidth="4" />
      </pattern>
    </defs>
    <rect width="100%" height="100%" fill="url(#grid)" />
  </Layer>
);

export default function App() {
  return (
    <>
      <Global />
      <Canvas>
        <Backdrop />
        {groups.map((g) => (
          <GroupBox key={g.title} $x={px(g.x)} $y={px(g.y)} $w={px(g.w)} $h={px(g.h)} $color={g.color}>
            <GroupTitle $color={g.color}>
              {g.title}
              {g.pin && <Pin size={32} />}
            </GroupTitle>
          </GroupBox>
        ))}
        <Layer aria-hidden="true">
          <g transform={`scale(${ZOOM})`}>
            {links.map((link, n) => <Wire key={n} link={link} />)}
            {looseWires.map((wire) => (
              <path key={wire.d} d={wire.d} fill="none" stroke={wire.color} strokeWidth="4.5" />
            ))}
            <circle cx="1662" cy="403" r="7.5" fill={C.link} />
            <circle cx="2472" cy="2570" r="7.5" fill={C.int} />
          </g>
        </Layer>
        {nodes.map((node) => <NodeView key={node.id} node={node} />)}
        <Stats>
          <span>T: 0.00s</span>
          <span>I: 0</span>
          <span>N: 95 [95]</span>
          <span>V: 221</span>
          <span>FPS:59.88</span>
        </Stats>
      </Canvas>
    </>
  );
}
